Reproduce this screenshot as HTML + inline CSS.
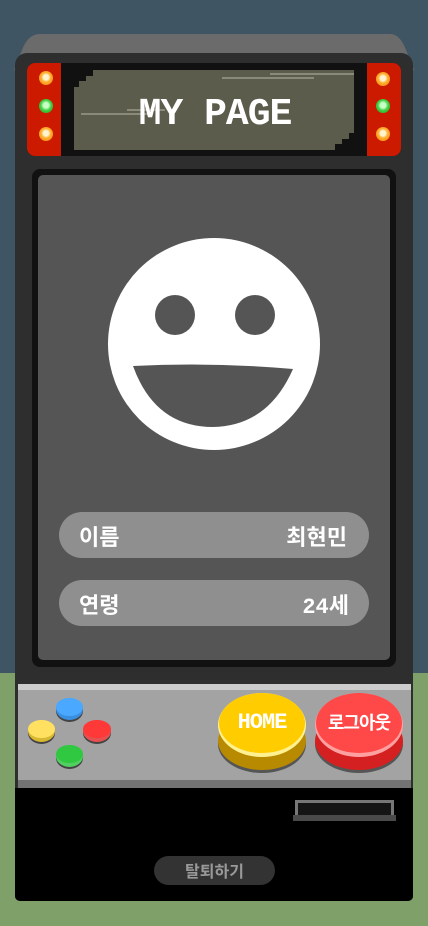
<!DOCTYPE html>
<html><head><meta charset="utf-8"><style>
*{margin:0;padding:0;box-sizing:border-box}
body{width:428px;height:926px;position:relative;overflow:hidden;background:#3f5564;font-family:"Liberation Mono","Noto Sans CJK KR",monospace}
.a{position:absolute}
.led{position:absolute;width:14px;height:14px;border-radius:50%}
.o{background:radial-gradient(circle at 50% 45%,#fff3d0 0 25%,#ffb030 45%,#f08000 100%)}
.g{background:radial-gradient(circle at 50% 45%,#c8ffc8 0 25%,#40d040 50%,#20a020 100%)}
.pill{position:absolute;left:59px;width:310px;height:46px;border-radius:23px;background:#8f8f8f;color:#fff;font:bold 22px "Liberation Mono","Noto Sans CJK KR",monospace}
.pill span{position:absolute;top:8px}
</style></head><body>
<div class="a" style="left:0;top:673px;width:428px;height:253px;background:#80a06a"></div>
<svg class="a" style="left:0;top:30px" width="428" height="40"><path d="M40 4H390Q400 4 406 20L414 40H14L22 20Q28 4 40 4Z" fill="#6b6b6b"/></svg>
<div class="a" style="left:15px;top:53px;width:398px;height:848px;background:#2e2e2e;border-radius:12px 12px 5px 5px"></div>
<div class="a" style="left:27px;top:63px;width:374px;height:93px;background:#111;border-radius:8px"></div>
<div class="a" style="left:27px;top:63px;width:34px;height:93px;background:#cc1a00;border-radius:8px 0 0 8px"></div>
<div class="a" style="left:367px;top:63px;width:34px;height:93px;background:#cc1a00;border-radius:0 8px 8px 0"></div>
<div class="led o" style="left:39px;top:71px"></div><div class="led g" style="left:39px;top:99px"></div><div class="led o" style="left:39px;top:127px"></div>
<div class="led o" style="left:376px;top:72px"></div><div class="led g" style="left:376px;top:99px"></div><div class="led o" style="left:376px;top:127px"></div>
<svg class="a" style="left:74px;top:70px" width="280" height="80"><rect width="280" height="80" fill="#5c5c4c"/><path d="M0 0H19V0H0Z" fill="#111"/><path d="M0 0H19V0 M0 0V17H5V11H12V6H19V0Z" fill="#111"/><path d="M280 80H261V74H268V69H275V63H280Z" fill="#111"/><rect x="196" y="3" width="84" height="2" fill="#8a8a7a"/><rect x="148" y="7" width="92" height="2" fill="#8a8a7a"/><rect x="53" y="39" width="38" height="2" fill="#8a8a7a"/><rect x="7" y="43" width="72" height="2" fill="#8a8a7a"/><text x="141" y="54" text-anchor="middle" fill="#fff" font-family="Liberation Mono" font-weight="bold" font-size="38" letter-spacing="-1">MY PAGE</text></svg>
<div class="a" style="left:32px;top:169px;width:364px;height:498px;background:#111;border-radius:8px"></div>
<div class="a" style="left:38px;top:175px;width:352px;height:485px;background:#555;border-radius:5px"></div>
<svg class="a" style="left:0;top:0" width="428" height="500"><circle cx="214" cy="344" r="106" fill="#fff"/><circle cx="175" cy="315" r="20" fill="#555"/><circle cx="255" cy="315" r="20" fill="#555"/><path d="M133 366 Q213 362 293 369 Q268 426 213 427 Q155 427 133 366Z" fill="#555"/></svg>
<div class="pill" style="top:512px"><span style="left:20px">이름</span><span style="right:22px">최현민</span></div>
<div class="pill" style="top:580px"><span style="left:20px">연령</span><span style="right:20px">24세</span></div>
<div class="a" style="left:18px;top:684px;width:393px;height:104px;background:#a3a3a3;border-top:6px solid #ccc;border-bottom:8px solid #737373"></div>
<div class="a" style="left:56px;top:698px;width:27px;height:22px;border-radius:50%;background:#3a8fe0;box-shadow:0 2px 0 #444"></div><div class="a" style="left:56px;top:698px;width:27px;height:18px;border-radius:50%;background:#4aa8ff"></div>
<div class="a" style="left:28px;top:720px;width:27px;height:22px;border-radius:50%;background:#d8b830;box-shadow:0 2px 0 #444"></div><div class="a" style="left:28px;top:720px;width:27px;height:18px;border-radius:50%;background:#ffe060"></div>
<div class="a" style="left:83px;top:720px;width:28px;height:22px;border-radius:50%;background:#e85050;box-shadow:0 2px 0 #444"></div><div class="a" style="left:83px;top:720px;width:28px;height:18px;border-radius:50%;background:#ff3838"></div>
<div class="a" style="left:56px;top:745px;width:27px;height:22px;border-radius:50%;background:#50d060;box-shadow:0 2px 0 #444"></div><div class="a" style="left:56px;top:745px;width:27px;height:18px;border-radius:50%;background:#30c840"></div>
<div class="a" style="left:218px;top:712px;width:88px;height:58px;border-radius:50%;background:#b88a00;box-shadow:0 3px 0 #555"></div>
<div class="a" style="left:218px;top:693px;width:88px;height:64px;border-radius:50%;background:#fff090"></div>
<div class="a" style="left:219px;top:693px;width:86px;height:60px;border-radius:50%;background:#ffcc00;color:#fff;font:bold 22px 'Liberation Mono',monospace;text-align:center;line-height:60px;letter-spacing:-1px">HOME</div>
<div class="a" style="left:315px;top:712px;width:88px;height:58px;border-radius:50%;background:#d42020;box-shadow:0 3px 0 #555"></div>
<div class="a" style="left:315px;top:693px;width:88px;height:64px;border-radius:50%;background:#ffa0a0"></div>
<div class="a" style="left:316px;top:693px;width:86px;height:60px;border-radius:50%;background:#ff4848;color:#fff;font:bold 18px 'Noto Sans CJK KR',sans-serif;text-align:center;line-height:58px;letter-spacing:-1px">로그아웃</div>
<div class="a" style="left:15px;top:788px;width:398px;height:113px;background:#000;border-radius:0 0 5px 5px"></div>
<div class="a" style="left:295px;top:800px;width:99px;height:16px;background:#151515;border:3px solid #777;border-bottom:none"></div>
<div class="a" style="left:293px;top:815px;width:103px;height:6px;background:#4a4a4a"></div>
<div class="a" style="left:154px;top:856px;width:121px;height:29px;border-radius:15px;background:#333;color:#999;font:bold 16px 'Noto Sans CJK KR',sans-serif;text-align:center;line-height:29px">탈퇴하기</div>
</body></html>
